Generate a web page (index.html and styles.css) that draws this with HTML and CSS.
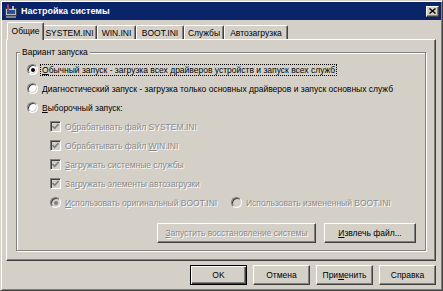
FILE: index.html
```html
<!DOCTYPE html>
<html lang="ru">

<head>
  <meta charset="UTF-8" />
  <title>Настройка системы</title>
  <link rel="stylesheet" href="styles.css">
</head>

<body>
  <div class="window">
    <div class="titlebar">
      <svg class="app-icon" width="14" height="14" viewBox="0 0 14 14">
        <rect x="1.5" y="4.5" width="11" height="7" fill="#c0c0c0" stroke="#404040" />
        <rect x="3" y="6" width="8" height="4" fill="#2a4f9a" />
        <rect x="2" y="12" width="10" height="2" fill="#808080" />
        <path d="M4 0.5 V6" stroke="#b03a6a" stroke-width="2" />
        <path d="M9 2 V6" stroke="#e0e0e0" stroke-width="1.5" />
      </svg>
      <span class="title">Настройка системы</span>
      <span class="close-btn">
        <svg width="7" height="6" viewBox="0 0 7 6">
          <path d="M0.5 0.5 L6.5 5.5 M6.5 0.5 L0.5 5.5" stroke="#000" stroke-width="1.4" />
        </svg>
      </span>
    </div>

    <div class="tabs">
      <div class="tab active">Общие</div>
      <div class="tab">SYSTEM.INI</div>
      <div class="tab">WIN.INI</div>
      <div class="tab">BOOT.INI</div>
      <div class="tab">Службы</div>
      <div class="tab">Автозагрузка</div>
    </div>

    <div class="panel">
      <fieldset class="group">
        <legend>Вариант запуска</legend>
        <div class="group-body">
          <div class="option">
            <span class="radio checked"></span>
            <span class="focus"><u>О</u>бычный запуск - загрузка всех драйверов устройств и запуск всех служб</span>
          </div>
          <div class="option">
            <span class="radio"></span>
            <span><u>Д</u>иагностический запуск - загрузка только основных драйверов и запуск основных служб</span>
          </div>
          <div class="option">
            <span class="radio"></span>
            <span><u>В</u>ыборочный запуск:</span>
          </div>

          <div class="sub">
            <div class="option disabled">
              <span class="check"><svg width="7" height="7" viewBox="0 0 7 7"><path d="M0.5 3 L2.7 5.3 L6.5 1" fill="none" stroke="#808080" stroke-width="1.6" /></svg></span>
              <span>О<u>б</u>рабатывать файл SYSTEM.INI</span>
            </div>
            <div class="option disabled">
              <span class="check"><svg width="7" height="7" viewBox="0 0 7 7"><path d="M0.5 3 L2.7 5.3 L6.5 1" fill="none" stroke="#808080" stroke-width="1.6" /></svg></span>
              <span>Обрабатывать файл <u>W</u>IN.INI</span>
            </div>
            <div class="option disabled">
              <span class="check"><svg width="7" height="7" viewBox="0 0 7 7"><path d="M0.5 3 L2.7 5.3 L6.5 1" fill="none" stroke="#808080" stroke-width="1.6" /></svg></span>
              <span><u>З</u>агружать системные службы</span>
            </div>
            <div class="option disabled">
              <span class="check"><svg width="7" height="7" viewBox="0 0 7 7"><path d="M0.5 3 L2.7 5.3 L6.5 1" fill="none" stroke="#808080" stroke-width="1.6" /></svg></span>
              <span>За<u>г</u>ружать элементы автозагрузки</span>
            </div>
            <div class="boot-row">
              <div class="option disabled boot-first">
                <span class="radio checked"></span>
                <span><u>И</u>спользовать оригинальный BOOT.INI</span>
              </div>
              <div class="option disabled">
                <span class="radio"></span>
                <span>Использовать измененный BOOT.INI</span>
              </div>
            </div>
          </div>

          <div class="group-buttons">
            <button class="btn btn-restore" disabled><u>З</u>апустить восстановление системы</button>
            <button class="btn btn-extract"><u>И</u>звлечь файл...</button>
          </div>
        </div>
      </fieldset>
    </div>

    <div class="dialog-buttons">
      <button class="btn default">OK</button>
      <button class="btn">Отмена</button>
      <button class="btn">При<u>м</u>енить</button>
      <button class="btn">Справка</button>
    </div>
  </div>
</body>

</html>
```

FILE: styles.css
```css
body {
  margin: 0;
  font-family: "Liberation Sans", Arial, sans-serif;
  font-size: 8.5px;
  color: #000;
  background: #d4d0c8;
}

.window {
  width: 443px;
  height: 291px;
  box-sizing: border-box;
  border: 1px solid;
  border-color: #d4d0c8 #404040 #404040 #d4d0c8;
  box-shadow: inset 1px 1px #fff, inset -1px -1px #808080;
  padding: 1px;
  display: flex;
  flex-direction: column;
}

/* title bar */
.titlebar {
  height: 18px;
  flex: none;
  background: #0a246a;
  color: #fff;
  display: flex;
  align-items: center;
  gap: 3px;
  padding: 0 2px;
  font-size: 9px;
  font-weight: bold;
}

.app-icon {
  flex: none;
}

.title {
  flex: 1;
}

.close-btn {
  width: 13px;
  height: 11px;
  box-sizing: border-box;
  background: #d4d0c8;
  border: 1px solid;
  border-color: #fff #404040 #404040 #fff;
  box-shadow: inset -1px -1px #808080;
  display: flex;
  align-items: center;
  justify-content: center;
}

/* tabs */
.tabs {
  height: 20px;
  flex: none;
  display: flex;
  align-items: flex-end;
  padding-left: 7px;
  margin-bottom: -1px;
  position: relative;
  z-index: 1;
}

.tab {
  height: 14px;
  margin-bottom: 1px;
  box-sizing: border-box;
  padding: 0;
  background: #d4d0c8;
  border: 1px solid;
  border-bottom: none;
  border-color: #fff #404040 transparent #fff;
  border-radius: 2px 2px 0 0;
  box-shadow: inset -1px 0 #808080;
  display: flex;
  align-items: center;
  justify-content: center;
  white-space: nowrap;
}

.tab:nth-child(2) { width: 55px; }
.tab:nth-child(3) { width: 39px; }
.tab:nth-child(4) { width: 48px; }
.tab:nth-child(5) { width: 40px; }
.tab:nth-child(6) { width: 64px; }

.tab.active {
  width: 37px;
  height: 18px;
  margin: 0 -2px;
  padding-bottom: 2px;
  position: relative;
  z-index: 2;
}

/* tab page */
.panel {
  height: 222px;
  flex: none;
  box-sizing: border-box;
  margin: 0 5px 0 4px;
  border: 1px solid;
  border-color: #fff #404040 #404040 #fff;
  box-shadow: inset -1px -1px #808080;
  padding: 6px 9px 9px 9px;
  display: flex;
  flex-direction: column;
}

.group {
  flex: 1;
  margin: 0;
  padding: 0 0 0 3px;
  min-width: 0;
  border: 1px solid #808080;
  box-shadow: inset 1px 1px #fff, 1px 1px #fff;
}

.group legend {
  padding: 0 2px;
  line-height: 12px;
  background: #d4d0c8;
}

.group-body {
  padding: 2px 9px 0 7px;
  display: flex;
  flex-direction: column;
}

.option {
  height: 19px;
  display: flex;
  align-items: center;
  gap: 4px;
  white-space: nowrap;
}

.option.disabled {
  color: #8a8a8a;
  text-shadow: 1px 1px #fff;
}

.focus {
  outline: 1px dotted #000;
  padding: 0 1px;
  margin-left: -1px;
}

.radio {
  width: 11px;
  height: 11px;
  flex: none;
  box-sizing: border-box;
  border-radius: 50%;
  background: #fff;
  border: 1px solid;
  border-color: #808080 #fff #fff #808080;
  box-shadow: inset 1px 1px #404040, inset -1px -1px #d4d0c8;
  display: flex;
  align-items: center;
  justify-content: center;
}

.radio.checked::after {
  content: "";
  width: 4px;
  height: 4px;
  border-radius: 50%;
  background: #000;
}

.disabled .radio {
  background: #d4d0c8;
}

.disabled .radio.checked::after {
  background: #808080;
}

.check {
  width: 11px;
  height: 11px;
  flex: none;
  box-sizing: border-box;
  background: #d4d0c8;
  border: 1px solid;
  border-color: #808080 #fff #fff #808080;
  box-shadow: inset 1px 1px #404040, inset -1px -1px #d4d0c8;
  display: flex;
  align-items: center;
  justify-content: center;
}

.sub {
  padding-left: 23px;
}

.boot-row {
  display: flex;
}

.boot-first {
  width: 181px;
}

/* buttons */
.btn {
  height: 20px;
  box-sizing: border-box;
  padding: 0;
  font: inherit;
  color: #000;
  background: #d4d0c8;
  border: 1px solid;
  border-color: #fff #404040 #404040 #fff;
  border-radius: 0;
  box-shadow: inset -1px -1px #808080;
}

.btn:disabled {
  color: #8a8a8a;
  text-shadow: 1px 1px #fff;
}

.btn.default {
  border-color: #000;
  box-shadow: inset 1px 1px #fff, inset -1px -1px #404040, inset -2px -2px #808080;
}

.group-buttons {
  display: flex;
  justify-content: flex-end;
  gap: 8px;
  margin-top: 11px;
}

.btn-restore {
  width: 159px;
}

.btn-extract {
  width: 92px;
}

.dialog-buttons {
  display: flex;
  justify-content: flex-end;
  gap: 6px;
  margin: 4px 5px 0 0;
}

.dialog-buttons .btn {
  width: 57px;
}
```
